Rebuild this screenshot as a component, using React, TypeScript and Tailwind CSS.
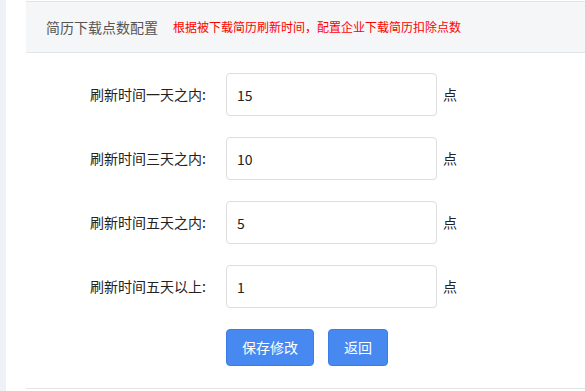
import React from "react";

const rows = [
  { label: "刷新时间一天之内:", value: "15" },
  { label: "刷新时间三天之内:", value: "10" },
  { label: "刷新时间五天之内:", value: "5" },
  { label: "刷新时间五天以上:", value: "1" },
];

export default function App() {
  return (
    <div
      className="flex h-[391px] w-[585px] overflow-hidden bg-white"
      style={{ fontFamily: '"Noto Sans CJK SC", "Noto Sans", sans-serif' }}
    >
      <div className="w-[6px] shrink-0 bg-[#eef1f5]" />
      <div className="flex-1 pt-px pl-5">
        {/* Header */}
        <div className="flex h-[52px] items-center border-y border-[#e3e4e6] bg-[#f5f6f8] pl-5">
          <span className="text-[14px] text-[#555]">简历下载点数配置</span>
          <span className="ml-[15px] text-[12px] text-[#ff0000]">
            根据被下载简历刷新时间，配置企业下载简历扣除点数
          </span>
        </div>

        {/* Form */}
        <div className="flex flex-col gap-[21px] pt-5">
          {rows.map((row) => (
            <div key={row.label} className="flex items-center">
              <label className="w-[200px] pr-5 text-right text-[14px] text-[#222]">
                {row.label}
              </label>
              <input
                readOnly
                value={row.value}
                className="h-[43px] w-[211px] rounded border border-[#ddd] bg-white px-[10px] text-[14px] text-[#222] outline-none"
              />
              <span className="ml-[6px] text-[14px] text-[#222]">点</span>
            </div>
          ))}
          <div className="flex gap-[14px] pl-[200px]">
            <button className="h-[37px] w-[88px] rounded border border-[#3a7de8] bg-[#4789f0] text-[14px] text-white">
              保存修改
            </button>
            <button className="h-[37px] w-[60px] rounded border border-[#3a7de8] bg-[#4789f0] text-[14px] text-white">
              返回
            </button>
          </div>
        </div>
        <div className="mt-[22px] border-t border-[#e3e4e6]" />
      </div>
    </div>
  );
}
